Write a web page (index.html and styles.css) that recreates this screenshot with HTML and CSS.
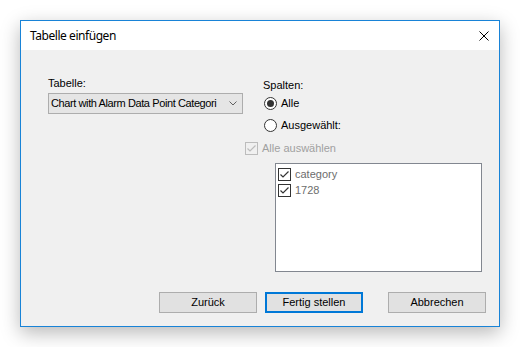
FILE: index.html
```html
<!DOCTYPE html>
<html lang="de">
<head>
    <meta charset="UTF-8">
    <meta name="viewport" content="width=device-width, initial-scale=1.0">
    <title>Tabelle einfügen</title>
    <link rel="stylesheet" href="styles.css">
</head>
<body>
    <div class="window">
        <div class="titlebar">
            <span class="title">Tabelle einfügen</span>
            <svg class="close" width="10" height="10" viewBox="0 0 10 10">
                <path d="M0.5 0.5 L9.5 9.5 M9.5 0.5 L0.5 9.5" stroke="#000" stroke-width="1" fill="none"/>
            </svg>
        </div>

        <div class="client">
            <div class="main">
                <div class="col-left">
                    <div class="label">Tabelle:</div>
                    <div class="combo">
                        <span class="combo-text">Chart with Alarm Data Point Categori</span>
                        <svg class="chevron" width="8" height="5" viewBox="0 0 8 5">
                            <path d="M0.5 0.5 L4 4 L7.5 0.5" stroke="#606060" stroke-width="1" fill="none"/>
                        </svg>
                    </div>
                </div>

                <div class="col-right">
                    <div class="label">Spalten:</div>

                    <div class="row radio-row first">
                        <svg class="mark" width="13" height="13" viewBox="0 0 13 13">
                            <circle cx="6.5" cy="6.5" r="6" fill="#fff" stroke="#333" stroke-width="1"/>
                            <circle cx="6.5" cy="6.5" r="3.5" fill="#333"/>
                        </svg>
                        <span>Alle</span>
                    </div>

                    <div class="row radio-row second">
                        <svg class="mark" width="13" height="13" viewBox="0 0 13 13">
                            <circle cx="6.5" cy="6.5" r="6" fill="#fff" stroke="#333" stroke-width="1"/>
                        </svg>
                        <span>Ausgewählt:</span>
                    </div>

                    <div class="row check-row disabled">
                        <svg class="mark" width="13" height="13" viewBox="0 0 13 13">
                            <rect x="0.5" y="0.5" width="12" height="12" fill="#f0f0f0" stroke="#bcbcbc"/>
                            <path d="M2.5 6.5 L5 9 L10.5 3.5" stroke="#bcbcbc" stroke-width="1.2" fill="none"/>
                        </svg>
                        <span>Alle auswählen</span>
                    </div>

                    <div class="listbox">
                        <div class="list-item">
                            <svg class="mark" width="13" height="13" viewBox="0 0 13 13">
                                <rect x="0.5" y="0.5" width="12" height="12" fill="#fff" stroke="#333"/>
                                <path d="M2.5 6.5 L5 9 L10.5 3.5" stroke="#333" stroke-width="1.2" fill="none"/>
                            </svg>
                            <span>category</span>
                        </div>
                        <div class="list-item">
                            <svg class="mark" width="13" height="13" viewBox="0 0 13 13">
                                <rect x="0.5" y="0.5" width="12" height="12" fill="#fff" stroke="#333"/>
                                <path d="M2.5 6.5 L5 9 L10.5 3.5" stroke="#333" stroke-width="1.2" fill="none"/>
                            </svg>
                            <span>1728</span>
                        </div>
                    </div>
                </div>
            </div>

            <div class="buttons">
                <button class="btn">Zurück</button>
                <button class="btn default">Fertig stellen</button>
                <button class="btn cancel">Abbrechen</button>
            </div>
        </div>
    </div>
</body>
</html>
```

FILE: styles.css
```css
body {
    margin: 0;
    padding: 20px;
    background: #ffffff;
    font-family: 'Liberation Sans', Arial, sans-serif;
    font-size: 11px;
    line-height: 13px;
    color: #000000;
}

.window {
    box-sizing: border-box;
    width: 480px;
    height: 307px;
    border: 1px solid #1883d7;
    background: #f0f0f0;
    display: flex;
    flex-direction: column;
    box-shadow: 0 6px 18px rgba(0, 0, 0, 0.28);
}

.titlebar {
    height: 29px;
    background: #ffffff;
    display: flex;
    align-items: center;
    justify-content: space-between;
    padding: 0 10px 0 9px;
}

.title {
    font-family: 'Noto Sans', 'Open Sans', sans-serif;
    font-size: 12px;
    line-height: 16px;
    letter-spacing: -0.45px;
    margin-top: 1px;
}

.close {
    display: block;
    margin-top: 1px;
}

.client {
    flex: 1;
    display: flex;
    flex-direction: column;
}

.main {
    display: flex;
    flex: 1;
}

.col-left {
    margin: 27px 0 0 27px;
    width: 195px;
}

.combo {
    box-sizing: border-box;
    margin-top: 3px;
    height: 21px;
    border: 1px solid #adadad;
    background: #e5e5e5;
    display: flex;
    align-items: center;
    justify-content: space-between;
    padding: 0 5px 0 2px;
}

.combo-text {
    white-space: nowrap;
    letter-spacing: -0.4px;
}

.chevron {
    display: block;
    margin-left: 4px;
}

.col-right {
    margin: 29px 0 0 20px;
}

.row {
    display: flex;
    align-items: center;
    height: 13px;
}

.mark {
    display: block;
    flex-shrink: 0;
}

.radio-row {
    margin-left: 1px;
}

.radio-row span {
    margin-left: 4px;
}

.radio-row.first {
    margin-top: 5px;
}

.radio-row.second {
    margin-top: 9px;
}

.check-row {
    margin: 10px 0 0 -18px;
}

.check-row span {
    margin-left: 4px;
}

.disabled {
    color: #a0a0a0;
}

.listbox {
    box-sizing: border-box;
    margin: 8px 0 0 12px;
    width: 207px;
    height: 109px;
    border: 1px solid #828790;
    background: #ffffff;
    padding: 2px 0 0 2px;
}

.list-item {
    display: flex;
    align-items: center;
    height: 16px;
    color: #6d6d6d;
}

.list-item span {
    margin-left: 4px;
}

.buttons {
    display: flex;
    justify-content: flex-end;
    padding: 0 13px 13px 0;
}

.btn {
    box-sizing: border-box;
    width: 98px;
    height: 21px;
    border: 1px solid #adadad;
    background: #e1e1e1;
    font-family: 'Liberation Sans', Arial, sans-serif;
    font-size: 11px;
    line-height: 13px;
    color: #000000;
    padding: 0;
    margin-left: 8px;
}

.btn.default {
    border: 2px solid #0078d7;
}

.btn.cancel {
    margin-left: 25px;
}
```
